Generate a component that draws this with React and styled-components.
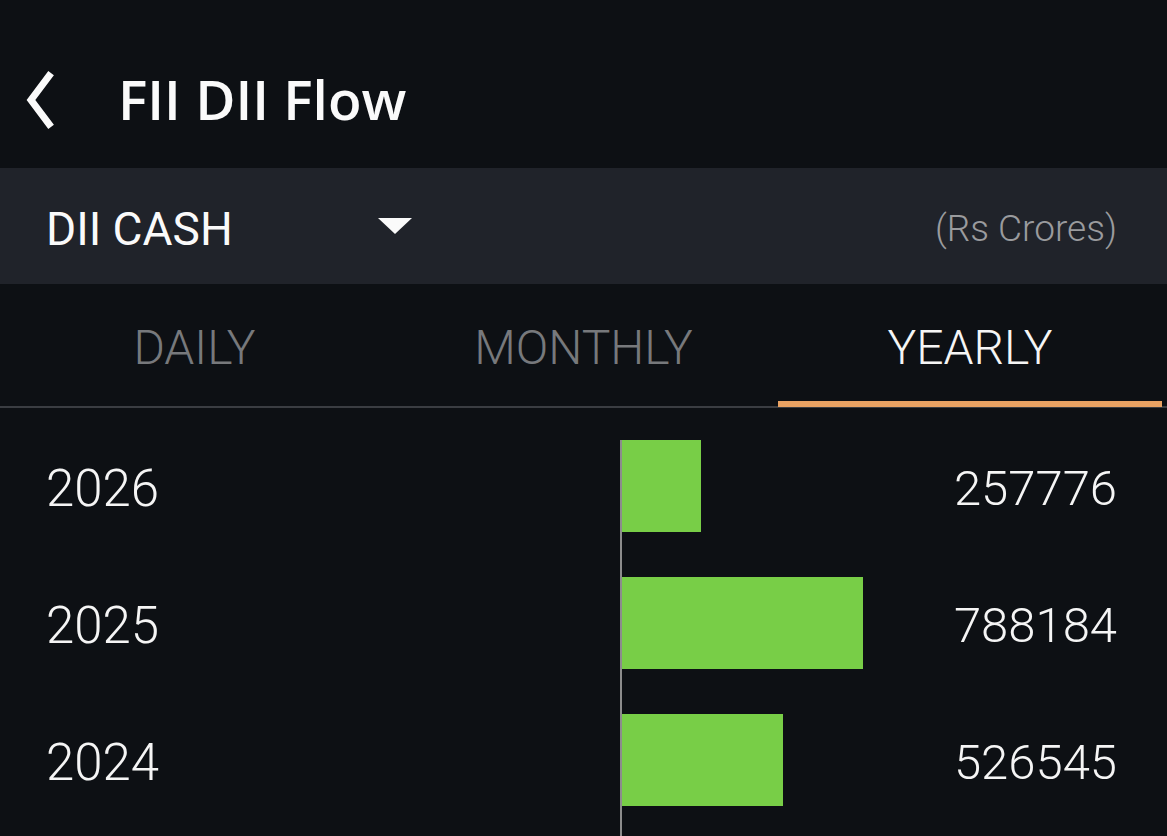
import React from 'react'
import styled, { createGlobalStyle } from 'styled-components'

const GlobalStyle = createGlobalStyle`
    html, body {
        margin: 0;
        padding: 0;
        background: #0d1014;
    }
    body {
        font-family: Roboto, "Liberation Sans", sans-serif;
        color: #f2f2f2;
        overflow: hidden;
    }
`

const rows = [
    { year: '2026', value: 257776 },
    { year: '2025', value: 788184 },
    { year: '2024', value: 526545 },
]

const MAX_BAR = 241
const maxValue = Math.max(...rows.map(r => r.value))

const Screen = styled.div`
    width: 1167px;
    height: 836px;
    background: #0d1014;
    display: flex;
    flex-direction: column;
    overflow: hidden;
`

const Header = styled.header`
    height: 168px;
    flex-shrink: 0;
    display: flex;
    align-items: center;
    padding: 32px 0 0 24px;
    box-sizing: border-box;
`

const BackButton = styled.div`
    width: 32px;
    height: 60px;
    display: flex;
    align-items: center;
    margin-right: 62px;
`

const Title = styled.h1`
    margin: 0;
    font-family: "Open Sans", "Noto Sans", sans-serif;
    font-weight: 600;
    font-size: 55px;
    color: #fafafa;
    margin-top: -4px;
`

const SelectBar = styled.div`
    height: 116px;
    flex-shrink: 0;
    background: #20232a;
    display: flex;
    align-items: center;
    padding: 5px 50px 0 46px;
    box-sizing: border-box;
`

const SelectLabel = styled.span`
    font-size: 46px;
    font-weight: 400;
    color: #fafafa;
    width: 332px;
`

const Caret = styled.span`
    width: 0;
    height: 0;
    border-left: 17px solid transparent;
    border-right: 17px solid transparent;
    border-top: 16px solid #fafafa;
    margin-top: -6px;
`

const Unit = styled.span`
    margin-left: auto;
    font-size: 37px;
    font-weight: 300;
    color: #9a9b9e;
`

const Tabs = styled.nav`
    height: 124px;
    flex-shrink: 0;
    display: grid;
    grid-template-columns: repeat(3, 1fr);
    border-bottom: 2px solid #3a3d42;
    box-sizing: border-box;
`

const Tab = styled.div`
    display: flex;
    align-items: center;
    justify-content: center;
    font-size: 48px;
    font-weight: 300;
    color: ${p => (p.$active ? '#f5f5f5' : '#77797c')};
    box-shadow: ${p => (p.$active ? 'inset 0 -6px 0 #e9a263' : 'none')};
    margin: ${p => (p.$active ? '0 5px -1px 0' : '0')};
    padding-top: 4px;
`

const List = styled.div`
    padding-top: 32px;
    flex: 1;
    display: flex;
    flex-direction: column;
`

const Row = styled.div`
    display: grid;
    grid-template-columns: 574px 1fr auto;
    padding: 0 50px 0 46px;
`

const Label = styled.div`
    height: 92px;
    display: flex;
    align-items: center;
    font-size: 51px;
    font-weight: 300;
    color: #f5f5f5;
    padding-top: 2px;
`

const Value = styled(Label)`
    font-size: 49px;
    justify-content: flex-end;
`

const BarCell = styled.div`
    border-left: 2px solid #8c8c8c;
    padding-bottom: 45px;
`

const Bar = styled.div`
    height: 92px;
    background: #78ce47;
`

const ChevronLeft = () => (
    <svg width="32" height="58" viewBox="0 0 32 58">
        <path d="M25 5 L7 29 L25 53" fill="none" stroke="#fafafa" strokeWidth="7" strokeLinecap="square" strokeLinejoin="miter" />
    </svg>
)

export default function App() {
    return (
        <Screen>
            <GlobalStyle />
            <Header>
                <BackButton>
                    <ChevronLeft />
                </BackButton>
                <Title>FII DII Flow</Title>
            </Header>
            <SelectBar>
                <SelectLabel>DII CASH</SelectLabel>
                <Caret />
                <Unit>(Rs Crores)</Unit>
            </SelectBar>
            <Tabs>
                <Tab>DAILY</Tab>
                <Tab>MONTHLY</Tab>
                <Tab $active>YEARLY</Tab>
            </Tabs>
            <List>
                {rows.map(r => (
                    <Row key={r.year}>
                        <Label>{r.year}</Label>
                        <BarCell>
                            <Bar style={{ width: Math.round((r.value / maxValue) * MAX_BAR) }} />
                        </BarCell>
                        <Value>{r.value}</Value>
                    </Row>
                ))}
            </List>
        </Screen>
    )
}
